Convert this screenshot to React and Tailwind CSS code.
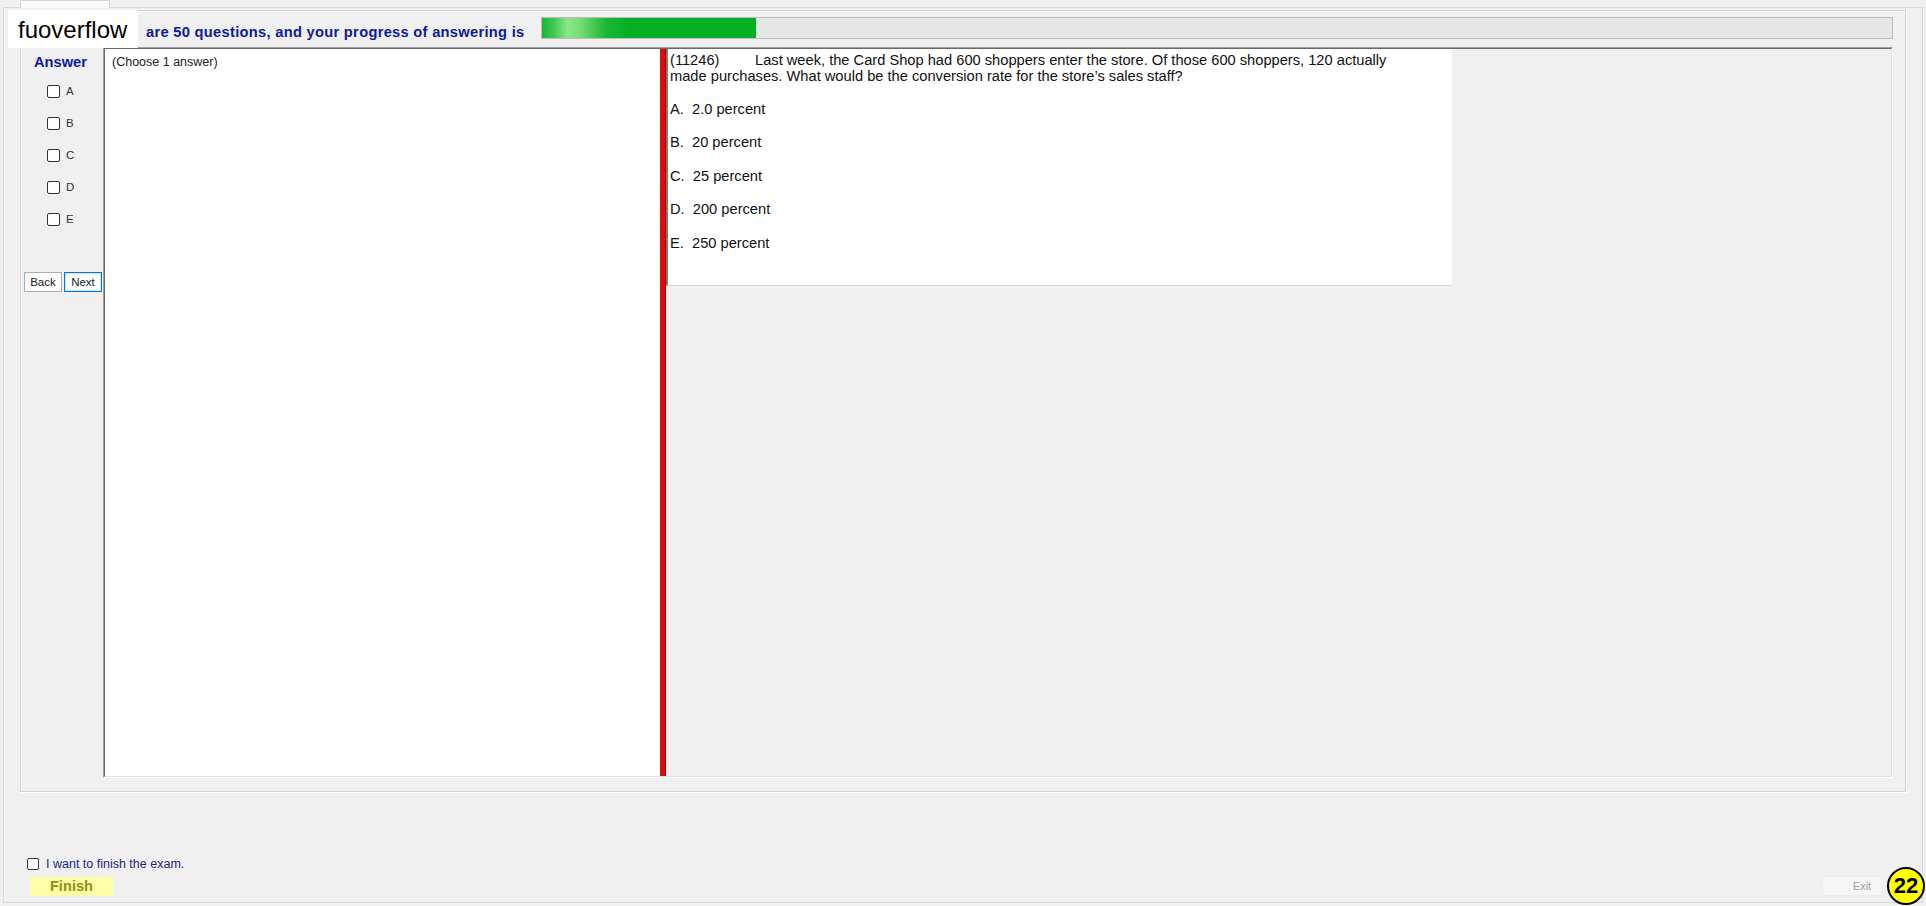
export default function App() {
  const opts = ["A", "B", "C", "D", "E"];
  const answers = ["A.  2.0 percent", "B.  20 percent", "C.  25 percent", "D.  200 percent", "E.  250 percent"];
  return (
    <div className="relative w-[1926px] h-[906px] overflow-hidden bg-[#f0f0f0] font-['Liberation_Sans',Arial,sans-serif] text-[#222]">
      {/* tab header strip */}
      <div className="h-[7px] flex">
        <div className="ml-[20px] w-[90px] h-[8px] bg-[#fafafa] border border-b-0 border-[#d6d6d6]"></div>
      </div>
      {/* tab page */}
      <div className="ml-[3px] w-[1920px] h-[896px] border border-[#d9d9d9] flex flex-col">
        {/* group box */}
        <div className="ml-[16px] mt-[2px] w-[1886px] h-[782px] border border-[#d3d3d3] shadow-[inset_1px_1px_0_#ffffff,1px_1px_0_#ffffff] flex flex-col">
          {/* progress row */}
          <div className="h-[36px] flex items-start shrink-0">
            <div className="ml-[125px] w-[395px] mt-[13px] text-[14.67px] tracking-[0.3px] leading-[17px] font-bold text-[#0d1aa0] whitespace-nowrap">
              are 50 questions, and your progress of answering is
            </div>
            <div className="mt-[6px] w-[1352px] h-[22px] border border-[#bcbcbc] bg-[#e6e6e6] flex">
              <div className="w-[214px] h-full bg-[linear-gradient(90deg,#18b832_0%,#3cc650_5%,#8ae68a_12%,#74da76_18%,#1cb735_30%,#06b025_40%,#06b025_100%)]"></div>
            </div>
          </div>
          {/* main row */}
          <div className="flex h-[731px] shrink-0">
            {/* left column */}
            <div className="w-[82px] flex flex-col">
              <div className="ml-[13px] mt-[7px] text-[14.67px] leading-[17px] font-bold text-[#0d1aa0]">Answer</div>
              <div className="mt-[14px] ml-[26px] flex flex-col gap-[19px]">
                {opts.map((o) => (
                  <div key={o} className="flex items-center h-[13px]">
                    <div className="w-[13px] h-[13px] border border-[#333] rounded-[2px] bg-white"></div>
                    <span className="ml-[6px] text-[11.5px] leading-[13px] text-[#333]">{o}</span>
                  </div>
                ))}
              </div>
              <div className="mt-[46px] ml-[3px] flex gap-[2px]">
                <div className="w-[38px] h-[20px] border border-[#adadad] bg-[#fdfdfd] text-[11.5px] leading-[18px] text-center text-[#222]">Back</div>
                <div className="w-[38px] h-[20px] border border-[#0078d7] bg-[#fdfdfd] text-[11.5px] leading-[18px] text-center text-[#222] shadow-[inset_0_0_0_1px_#cde6f7]">Next</div>
              </div>
            </div>
            {/* main panel (fixed 3d) */}
            <div className="w-[1790px] h-full border border-t-[#a0a0a0] border-l-[#a0a0a0] border-b-white border-r-white">
              <div className="w-full h-full border border-t-[#696969] border-l-[#696969] border-b-[#e3e3e3] border-r-[#e3e3e3] flex">
                <div className="w-[555px] h-full bg-white pl-[7px] pt-[6px] text-[12.5px] leading-[14px] text-[#222]">(Choose 1 answer)</div>
                <div className="w-[6px] h-full bg-[#dc0c0c] border-r border-[#a00000]"></div>
                <div className="flex-1 h-full">
                  <div className="w-[786px] h-[237px] bg-white border-l-2 border-l-[#7a7a7a] border-b border-b-[#d6d6d6] pl-[2px] pt-[3px] text-[14.67px] leading-[16px] text-[#111]">
                    <div className="whitespace-nowrap">
                      <span className="inline-block w-[85px]">(11246)</span>Last week, the Card Shop had 600 shoppers enter the store. Of those 600 shoppers, 120 actually
                      <br />
                      made purchases. What would be the conversion rate for the store’s sales staff?
                    </div>
                    <div className="mt-[9px]">
                      {answers.map((a) => (
                        <div key={a} className="leading-[33.4px] whitespace-pre">{a}</div>
                      ))}
                    </div>
                  </div>
                </div>
              </div>
            </div>
          </div>
        </div>
        {/* bottom area */}
        <div className="flex-1 flex items-end justify-between pb-[6px]">
          <div className="ml-[23px] flex flex-col">
            <div className="flex items-center h-[14px]">
              <div className="w-[12px] h-[12px] border border-[#333] rounded-[2px] bg-white"></div>
              <span className="ml-[7px] text-[12.5px] leading-[14px] text-[#1e1e8c]">I want to finish the exam.</span>
            </div>
            <div className="mt-[6px] ml-[3px] w-[83px] h-[19px] bg-[#ffffa8] text-[14.67px] leading-[19px] font-bold text-[#8f8f14] text-center">Finish</div>
          </div>
          <div className="mr-[40px] w-[60px] h-[20px] bg-[#f6f6f6] border border-[#ececec] pl-[20px] text-[11px] leading-[18px] text-center text-[#a0a0a0]">Exit</div>
        </div>
      </div>
      {/* watermark */}
      <div className="absolute left-[8px] top-[10px] w-[130px] h-[38px] bg-white pl-[10px] pt-[2px] text-[24px] leading-[36px] text-black">fuoverflow</div>
      {/* badge */}
      <div className="absolute left-[1887px] top-[867px] w-[38px] h-[38px] rounded-full bg-[#ffff00] border-2 border-black flex items-center justify-center text-[22px] font-bold text-black leading-none">22</div>
    </div>
  );
}
